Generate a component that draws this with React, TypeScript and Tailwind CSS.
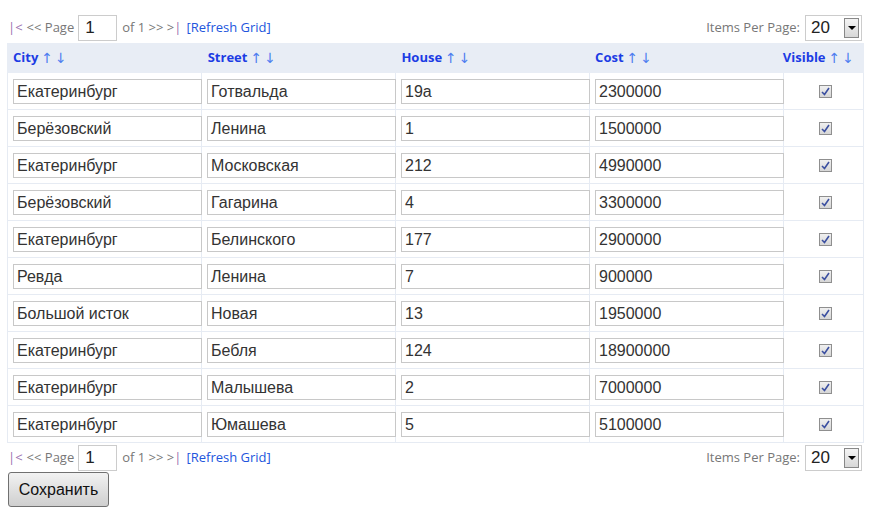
import React from "react";

const rows = [
  ["Екатеринбург", "Готвальда", "19а", "2300000"],
  ["Берёзовский", "Ленина", "1", "1500000"],
  ["Екатеринбург", "Московская", "212", "4990000"],
  ["Берёзовский", "Гагарина", "4", "3300000"],
  ["Екатеринбург", "Белинского", "177", "2900000"],
  ["Ревда", "Ленина", "7", "900000"],
  ["Большой исток", "Новая", "13", "1950000"],
  ["Екатеринбург", "Бебля", "124", "18900000"],
  ["Екатеринбург", "Малышева", "2", "7000000"],
  ["Екатеринбург", "Юмашева", "5", "5100000"],
];

const cols = ["City", "Street", "House", "Cost"];

function Arrows() {
  return (
    <span className="ml-[3px] flex gap-[2px] font-['DejaVu_Sans',sans-serif] text-[14px] text-[#4f7ef0] font-normal whitespace-nowrap">
      <span>↑</span>
      <span>↓</span>
    </span>
  );
}

function Pager() {
  return (
    <div className="flex items-center justify-between h-[27px] pl-[8px] pr-[16px] font-['Open_Sans',sans-serif] text-[13px]">
      <div className="flex items-center text-[#777]">
        <span className="text-[#9a6fb0]">|&lt;</span>
        <span className="ml-[4px]">&lt;&lt; Page</span>
        <div className="ml-[4px] w-[39px] h-[26px] border border-[#ccc] flex items-center pl-[6px] text-[17px] text-[#222] font-['Liberation_Sans',sans-serif]">
          1
        </div>
        <span className="ml-[5px]">of 1 &gt;&gt; &gt;</span>
        <span className="text-[#9a6fb0]">|</span>
        <span className="ml-[5px] text-[#2255dd]">[Refresh Grid]</span>
      </div>
      <div className="flex items-center text-[#777]">
        <span>Items Per Page:</span>
        <div className="ml-[5px] w-[57px] h-[26px] border border-[#ccc] flex items-center justify-between pl-[5px] pr-[2px] text-[17px] text-[#222] font-['Liberation_Sans',sans-serif]">
          20
          <div className="w-[15px] h-[20px] border border-[#888] bg-gradient-to-b from-[#f4f4f4] to-[#d8d8d8] flex items-center justify-center">
            <div className="w-0 h-0 border-l-[4px] border-r-[4px] border-t-[4px] border-l-transparent border-r-transparent border-t-black" />
          </div>
        </div>
      </div>
    </div>
  );
}

export default function App() {
  return (
    <div className="w-[878px] h-[521px] bg-white pt-[14px]">
      <Pager />
      <div className="mt-[2px] ml-[7px] w-[857px]">
        <div className="flex h-[30px] bg-[#e8edf5] items-center font-['Open_Sans',sans-serif] text-[13px]">
          {cols.map((c) => (
            <div key={c} className="w-[194px] pl-[6px] first:w-[195px] flex items-center">
              <span className="font-bold text-[#1c3ce4]">{c}</span>
              <Arrows />
            </div>
          ))}
          <div className="flex-1 flex items-center justify-end pr-[10px] whitespace-nowrap">
            <span className="font-bold text-[#1c3ce4]">Visible</span>
            <Arrows />
          </div>
        </div>
        <div className="border-l border-r border-[#e6ebf3]">
          {rows.map((r, i) => (
            <div key={i} className="flex h-[37px] border-b border-[#e6ebf3]">
              {r.map((v, j) => (
                <div key={j} className="w-[194px] border-r border-[#e6ebf3] pl-[5px] pt-[6px]">
                  <div className="w-[189px] h-[25px] border border-[#c8c8c8] flex items-center pl-[3px] font-['Liberation_Sans',sans-serif] text-[16px] text-[#333]">
                    {v}
                  </div>
                </div>
              ))}
              <div className="flex-1 flex items-center justify-center pl-[3px]">
                <div className="w-[13px] h-[13px] border border-[#8f8f8f] bg-gradient-to-b from-[#f0f0f0] to-[#d6d6d6] flex items-center justify-center">
                  <svg width="9" height="9" viewBox="0 0 9 9">
                    <path d="M1 5 L3.5 7.5 L8 1" stroke="#3b4fa0" strokeWidth="1.6" fill="none" />
                  </svg>
                </div>
              </div>
            </div>
          ))}
        </div>
      </div>
      <div className="mt-[1px]">
        <Pager />
      </div>
      <button className="ml-[8px] mt-[1px] w-[101px] h-[35px] border border-[#707070] rounded-[3px] bg-gradient-to-b from-[#f2f2f2] to-[#cfcfcf] font-['Liberation_Sans',sans-serif] text-[16px] text-[#111]">
        Сохранить
      </button>
    </div>
  );
}
